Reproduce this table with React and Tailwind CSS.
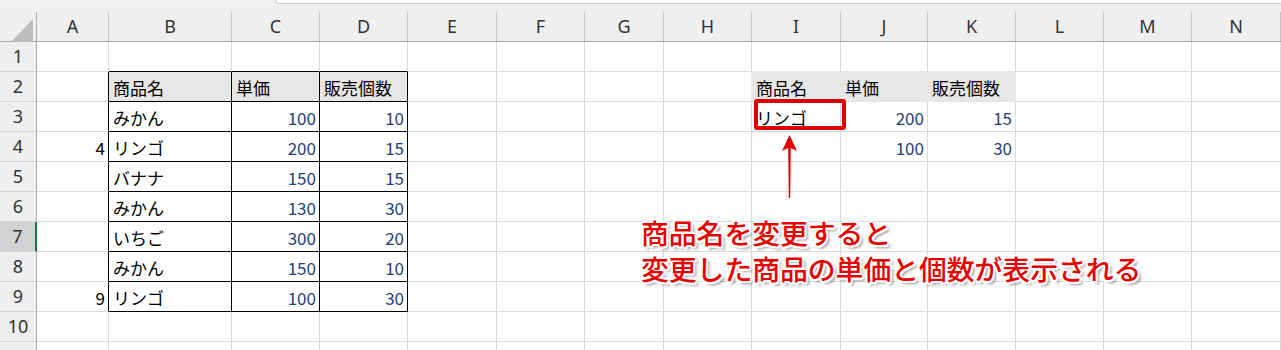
import React from "react";

const GRID =
  "grid grid-cols-[37px_72px_123px_88px_88px_89px_88px_79px_88px_89px_87px_88px_88px_88px_89px]";

const LETTERS = ["A", "B", "C", "D", "E", "F", "G", "H", "I", "J", "K", "L", "M", "N"];

// data[row] = { colIndex: value }
const data = {
  2: { 1: "商品名", 2: "単価", 3: "販売個数", 8: "商品名", 9: "単価", 10: "販売個数" },
  3: { 1: "みかん", 2: 100, 3: 10, 8: "リンゴ", 9: 200, 10: 15 },
  4: { 0: 4, 1: "リンゴ", 2: 200, 3: 15, 9: 100, 10: 30 },
  5: { 1: "バナナ", 2: 150, 3: 15 },
  6: { 1: "みかん", 2: 130, 3: 30 },
  7: { 1: "いちご", 2: 300, 3: 20 },
  8: { 1: "みかん", 2: 150, 3: 10 },
  9: { 0: 9, 1: "リンゴ", 2: 100, 3: 30 },
};

const ROWS = [1, 2, 3, 4, 5, 6, 7, 8, 9, 10, 11];

function cellClasses(r, c) {
  const filled = r === 2 && ((c >= 1 && c <= 3) || (c >= 8 && c <= 10));
  let right = "border-r-[#dadada]";
  if (r >= 2 && r <= 9 && c >= 0 && c <= 3) right = "border-r-black";
  else if (r === 2 && c >= 7 && c <= 10) right = "border-r-[#e7e6e6]";
  let bottom = "border-b-[#dadada]";
  if (c >= 1 && c <= 3 && r >= 1 && r <= 9) bottom = "border-b-black";
  else if ((r === 1 || r === 2) && c >= 8 && c <= 10) bottom = "border-b-[#e7e6e6]";
  const bg = filled ? "bg-[#e7e6e6]" : "bg-white";
  return `${right} ${bottom} ${bg}`;
}

function Cell({ r, c }) {
  const v = data[r] ? data[r][c] : undefined;
  const isNum = typeof v === "number";
  const numColor = c === 0 ? "text-black" : "text-[#1f3f7a]";
  return (
    <div
      className={`h-[30px] border-r border-b flex items-center pt-[3px] overflow-hidden whitespace-nowrap text-[17px] ${
        isNum ? `justify-end pr-[3px] ${numColor}` : "justify-start pl-[4px] text-black"
      } ${cellClasses(r, c)}`}
    >
      {v !== undefined ? v : null}
    </div>
  );
}

export default function App() {
  return (
    <div className="relative w-[1281px] h-[350px] overflow-hidden bg-white font-['Noto_Sans_CJK_JP',sans-serif]">
      {/* formula bar bottom edge */}
      <div className="flex h-[4px] bg-[#f0f0f0]">
        <div className="w-[275px]" />
        <div className="flex-1 bg-white border-l border-b border-[#c8c8c8] rounded-bl-[5px]" />
      </div>

      {/* column headers */}
      <div className={`${GRID} h-[38px] bg-[#efefef] border-b border-[#ababab] font-['Noto_Sans','Segoe_UI',sans-serif] text-[18px] text-[#333]`}>
        <div className="relative pt-2 flex">
          <div className="flex-1 border-r border-[#ababab]" />
          <svg className="absolute left-[10px] top-[14px]" width="24" height="24" viewBox="0 0 24 24">
            <polygon points="23,1 23,24 1,24" fill="#bdbdbd" />
          </svg>
        </div>
        {LETTERS.map((l) => (
          <div key={l} className="pt-2 flex">
            <div className="flex-1 border-r border-[#c6c6c6] flex items-center justify-center leading-none pb-[1px]">
              {l}
            </div>
          </div>
        ))}
      </div>

      {/* rows */}
      {ROWS.map((r) => (
        <div key={r} className={GRID}>
          <div
            className={`h-[30px] border-b border-b-[#d4d4d4] flex items-center justify-center font-['Noto_Sans','Segoe_UI',sans-serif] text-[18px] text-[#333] ${
              r === 7
                ? "bg-[#d2d2d2] border-r-2 border-r-[#217346]"
                : "bg-[#efefef] border-r border-r-[#ababab]"
            }`}
          >
            {r <= 10 ? r : null}
          </div>
          {LETTERS.map((l, c) => (
            <Cell key={l} r={r} c={c} />
          ))}
        </div>
      ))}

      {/* red highlight box around I3 */}
      <div className="absolute left-[754px] top-[99px] w-[92px] h-[31px] border-4 border-[#e00000] rounded-[3px]" />

      {/* arrow */}
      <svg className="absolute left-[780px] top-[134px]" width="18" height="66" viewBox="0 0 18 66">
        <polygon
          points="9.5,1 17,17 10.8,14 10.2,64 8.8,64 8.2,14 2,17"
          fill="#e00000"
        />
      </svg>

      {/* annotation */}
      <div className="absolute left-[641px] top-[214px] text-[27.8px] leading-[36px] font-medium text-[#e60000] whitespace-nowrap font-['Noto_Sans_CJK_JP',sans-serif] [text-shadow:-1.5px_-1.5px_0_#fff,1.5px_-1.5px_0_#fff,-1.5px_1.5px_0_#fff,1.5px_1.5px_0_#fff,0_2px_0_#fff,2px_0_0_#fff,-2px_0_0_#fff,0_-2px_0_#fff,3px_3px_3px_rgba(0,0,0,0.45)]">
        <div>商品名を変更すると</div>
        <div>変更した商品の単価と個数が表示される</div>
      </div>
    </div>
  );
}
